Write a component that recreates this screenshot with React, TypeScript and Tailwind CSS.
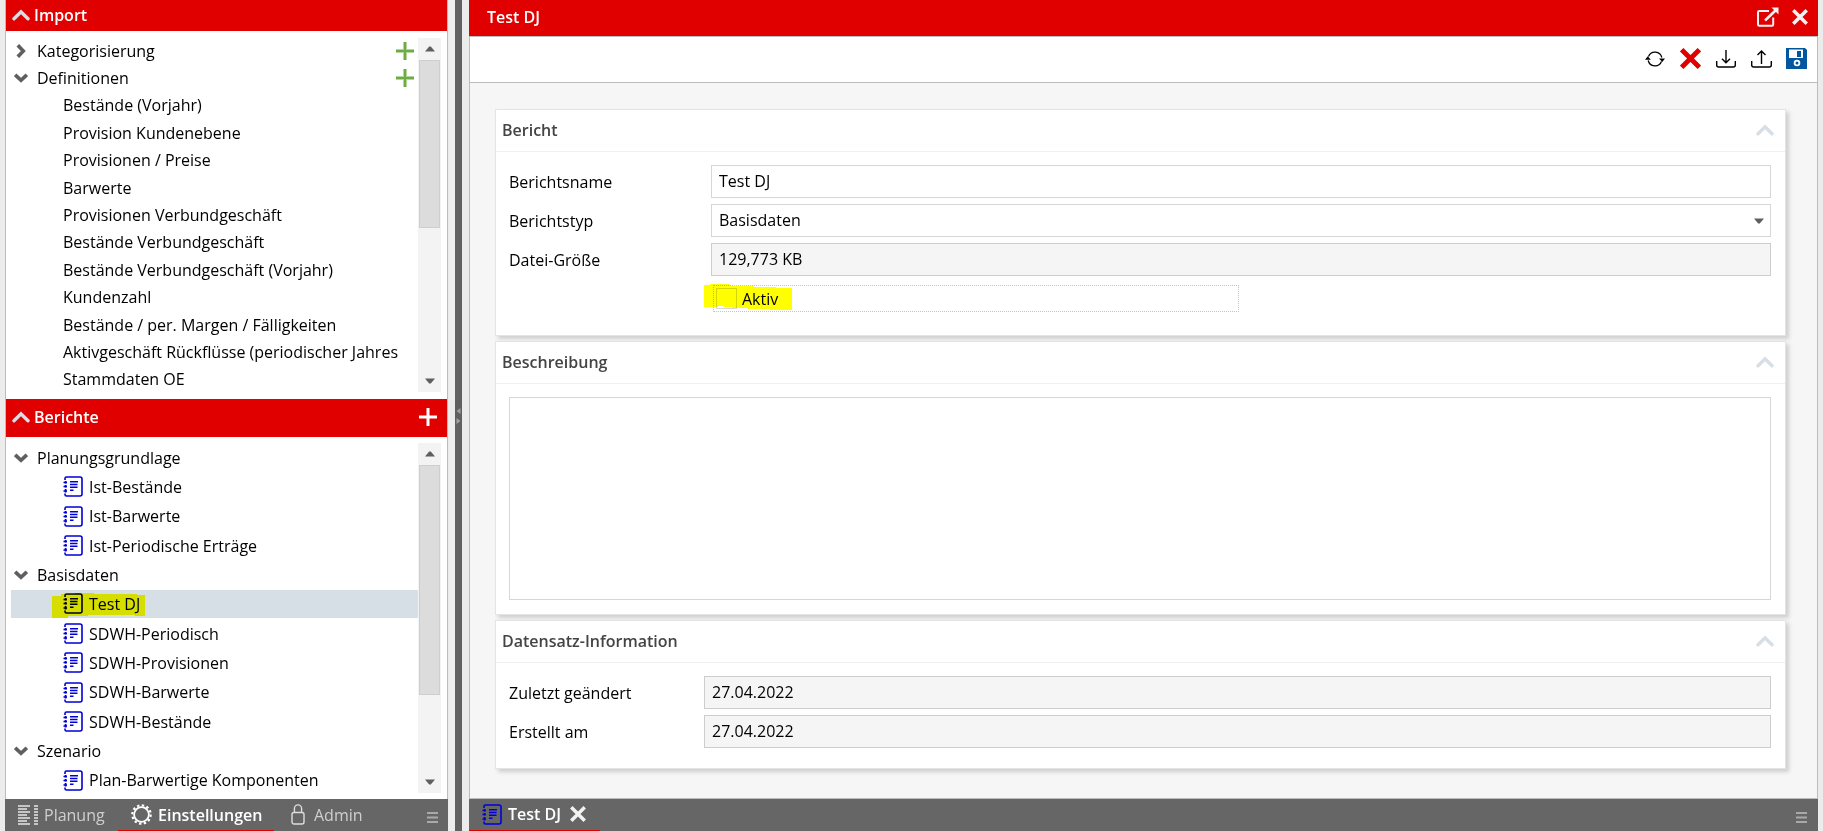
import { useState } from "react";
import type { ReactNode } from "react";

const DEFINITIONS = [
  "Bestände (Vorjahr)",
  "Provision Kundenebene",
  "Provisionen / Preise",
  "Barwerte",
  "Provisionen Verbundgeschäft",
  "Bestände Verbundgeschäft",
  "Bestände Verbundgeschäft (Vorjahr)",
  "Kundenzahl",
  "Bestände / per. Margen / Fälligkeiten",
  "Aktivgeschäft Rückflüsse (periodischer Jahres",
  "Stammdaten OE",
];

const REPORTS = [
  { name: "Planungsgrundlage", items: ["Ist-Bestände", "Ist-Barwerte", "Ist-Periodische Erträge"] },
  {
    name: "Basisdaten",
    items: ["Test DJ", "SDWH-Periodisch", "SDWH-Provisionen", "SDWH-Barwerte", "SDWH-Bestände"],
  },
  { name: "Szenario", items: ["Plan-Barwertige Komponenten"] },
];

function SectionChevron() {
  return (
    <svg width="18" height="12" viewBox="0 0 18 12" fill="none" stroke="#d6dee6" strokeWidth="3.4" strokeLinecap="round" aria-hidden="true">
      <path d="M2 9.8 L9 2.8 L16 9.8" />
    </svg>
  );
}

function TreeChevron({ open }: { open: boolean }) {
  return (
    <svg width="14" height="14" viewBox="0 0 14 14" fill="none" stroke="#5f5f5f" strokeWidth="3.6" aria-hidden="true">
      <path d={open ? "M1.2 3.8 L7 9.3 L12.8 3.8" : "M3.8 1.2 L9.3 7 L3.8 12.8"} />
    </svg>
  );
}

function Plus({ light }: { light?: boolean }) {
  return (
    <svg width="18" height="18" viewBox="0 0 18 18" aria-hidden="true">
      <path d="M9 0V18M0 9H18" stroke={light ? "#ffffff" : "#b4d59c"} strokeWidth={light ? 3 : 4} />
      {!light && <path d="M9 0V18M0 9H18" stroke="#6dab43" strokeWidth="2" />}
    </svg>
  );
}

function ReportIcon({ color = "#0000d8" }: { color?: string }) {
  return (
    <svg className="shrink-0" width="20" height="21" viewBox="0 0 20 21" fill="none" stroke={color} aria-hidden="true">
      <path d="M2 4V2.5Q2 1 3.5 1H17Q19 1 19 3V18Q19 20 17 20H3.5Q2 20 2 18.5V17.5" strokeWidth="1.6" />
      <path d="M0.5 6.5H4M0.5 10.5H4M0.5 15H4" strokeWidth="1.5" />
      <path d="M2.6 5V7.5M2.6 9V11.5M2.6 13V16.5" strokeWidth="1.8" />
      <path d="M7 5.8H15M7 8.5H14.5M7 11.2H14.5M7 14.2H10.5" strokeWidth="1.6" />
    </svg>
  );
}

function Cross({ size, color, width }: { size: number; color: string; width: number }) {
  return (
    <svg width={size} height={size} viewBox="0 0 20 20" stroke={color} strokeWidth={width} aria-hidden="true">
      <path d="M1.6 1.6L18.4 18.4M18.4 1.6L1.6 18.4" />
    </svg>
  );
}

function Bars() {
  return (
    <svg width="12" height="13" viewBox="0 0 12 13" stroke="#a9a9a9" strokeWidth="1.8" aria-hidden="true">
      <path d="M0 2H11M0 6.5H11M0 11H11" />
    </svg>
  );
}

function Triangle({ down, className = "" }: { down?: boolean; className?: string }) {
  return (
    <svg className={className} width="10" height="6" viewBox="0 0 10 6" fill="#5f5f5f" aria-hidden="true">
      <path d={down ? "M0 0.5H10L5.8 5.5H4.2Z" : "M0 5.5H10L5.8 0.5H4.2Z"} />
    </svg>
  );
}

function ScrollTrack({ children }: { children: ReactNode }) {
  return (
    <div aria-hidden="true" className="flex w-[23px] shrink-0 flex-col items-center bg-[#f3f3f3] pb-2">
      <div className="flex h-[22px] shrink-0 items-center">
        <Triangle />
      </div>
      {children}
      <Triangle down className="mt-auto" />
    </div>
  );
}

function SidebarHeader({ title, className, children }: { title: string; className: string; children?: ReactNode }) {
  return (
    <div className={"flex shrink-0 items-center bg-[#e10000] pb-0.5 pl-[6px] pr-[10px] text-white " + className}>
      <button className="flex items-center gap-1 font-semibold">
        <SectionChevron />
        {title}
      </button>
      {children}
    </div>
  );
}

function TreeGroup({ name, open = true, addable }: { name: string; open?: boolean; addable?: boolean }) {
  return (
    <li className="flex items-center pl-[3px] pr-1">
      <button className="flex flex-1 items-center gap-[9px] text-left" aria-expanded={open}>
        <TreeChevron open={open} />
        {name}
      </button>
      {addable && (
        <button aria-label={name + " hinzufügen"}>
          <Plus />
        </button>
      )}
    </li>
  );
}

function Card({ title, children }: { title: string; children: ReactNode }) {
  return (
    <section className="border border-[#e4e4e4] bg-white shadow-[3px_3px_4px_#cfcfcf]">
      <header className="flex h-[42px] items-center justify-between border-b border-[#f0f0f0] pb-0.5 pl-[6px] pr-[11px]">
        <h2 className="font-semibold text-[#444444]">{title}</h2>
        <button aria-label={title + " einklappen"}>
          <SectionChevron />
        </button>
      </header>
      {children}
    </section>
  );
}

function Row({ id, label, wide, children }: { id: string; label: string; wide?: boolean; children: ReactNode }) {
  return (
    <div className="flex items-center">
      <label htmlFor={id} className={"shrink-0 " + (wide ? "w-[202px]" : "w-[195px]")}>
        {label}
      </label>
      {children}
    </div>
  );
}

const FIELD = "h-[33px] w-full min-w-0 flex-1 rounded-none border px-[7px] pb-0.5 outline-none";
const EDITABLE = FIELD + " border-[#d6d6d6] bg-white";
const LOCKED = FIELD + " border-[#cdcdcd] bg-[#f5f5f5]";

export default function App() {
  const [name, setName] = useState("Test DJ");
  const [active, setActive] = useState(false);
  const [description, setDescription] = useState("");

  return (
    <div className="flex h-screen min-h-[780px] bg-[#ececec] pl-[5px] pr-[5px] font-['Open_Sans',sans-serif] text-[16px] leading-[22px] text-black">
      <aside className="flex w-[443px] shrink-0 flex-col">
        <div className="flex min-h-0 flex-1 flex-col border-x border-[#bcbcbc] bg-white">
          <SidebarHeader title="Import" className="h-[31px]" />
          <div className="flex min-h-0 flex-[368_1_0%] pl-[5px] pr-[6px]">
            <ul className="grid min-w-0 flex-1 auto-rows-fr py-[6px]">
              <TreeGroup name="Kategorisierung" open={false} addable />
              <TreeGroup name="Definitionen" addable />
              {DEFINITIONS.map((item) => (
                <li key={item} className="flex items-center overflow-hidden whitespace-nowrap pl-[52px]">
                  {item}
                </li>
              ))}
            </ul>
            <div className="flex py-[7px]">
              <ScrollTrack>
                <div className="h-[168px] w-[21px] border border-[#cecece] bg-[#dcdcdc]" />
              </ScrollTrack>
            </div>
          </div>

          <SidebarHeader title="Berichte" className="h-[38px]">
            <button className="ml-auto" aria-label="Bericht hinzufügen">
              <Plus light />
            </button>
          </SidebarHeader>
          <div className="flex min-h-0 flex-[362_1_0%] pl-[5px] pr-[6px]">
            <ul className="grid min-w-0 flex-1 auto-rows-fr pb-1 pt-[6px]">
              {REPORTS.flatMap((group) => [
                <TreeGroup key={group.name} name={group.name} />,
                ...group.items.map((item) => {
                  const selected = item === "Test DJ";
                  return (
                    <li
                      key={item}
                      className={"relative flex items-center gap-[6px] whitespace-nowrap pl-[52px] " + (selected ? "mb-px bg-[#d6dee6]" : "")}
                    >
                      <ReportIcon />
                      {item}
                      {selected && (
                        <svg className="absolute left-[41px] top-[3px] mix-blend-multiply" width="93" height="25" viewBox="0 0 93 25" fill="#ffff00" aria-hidden="true">
                          <path d="M0 3H9V1H23V0H42V1H85V2H93V23H83V22H36V23H16V25H0Z" />
                        </svg>
                      )}
                    </li>
                  );
                }),
              ])}
            </ul>
            <div className="flex py-[6px]">
              <ScrollTrack>
                <div className="h-[230px] w-[21px] border border-[#cecece] bg-[#dcdcdc]" />
              </ScrollTrack>
            </div>
          </div>
        </div>

        <nav className="flex h-8 shrink-0 bg-[#666666] text-[#cfcfcf]">
          <button className="flex w-[113px] items-center gap-[6px] pb-px pl-[13px]">
            <svg width="20" height="20" viewBox="0 0 20 20" fill="none" stroke="#e6e6e6" strokeWidth="1.3" aria-hidden="true">
              <path d="M0 1H12M0 4H9M0 7H12M0 10H9M0 13H12M0 16H9M0 19H12M16 1H20M16 4H20M16 7H20M16 10H20M16 13H20M16 16H20M16 19H20" />
            </svg>
            Planung
          </button>
          <button className="flex w-[156px] items-center gap-[6px] border-b border-[#e10000] pl-[13px] font-semibold text-white">
            <svg width="21" height="21" viewBox="0 0 21 21" fill="none" stroke="#ffffff" aria-hidden="true">
              <circle cx="10.5" cy="10.5" r="7.4" strokeWidth="1.8" />
              <circle cx="10.5" cy="10.5" r="9.2" strokeWidth="2.2" strokeDasharray="2.4 2.417" />
            </svg>
            Einstellungen
          </button>
          <button className="flex items-center gap-[9px] pb-px pl-[17px]">
            <svg width="14" height="21" viewBox="0 0 14 21" fill="none" stroke="#dddddd" strokeWidth="1.4" aria-hidden="true">
              <rect x="1" y="8.5" width="12" height="11.5" rx="2" />
              <path d="M3.4 8.5V4.5A3.6 3.6 0 0 1 10.6 4.5V8.5" />
            </svg>
            Admin
          </button>
          <button className="ml-auto mr-[9px] mt-[4px]" aria-label="Menü">
            <Bars />
          </button>
        </nav>
      </aside>

      <div className="mx-[7px] flex w-[7px] shrink-0 flex-col items-center justify-center bg-[#606060]">
        <svg width="5" height="16" viewBox="0 0 5 16" fill="#a0a0a0" aria-hidden="true">
          <path d="M4.5 0V6L0.5 3ZM0.5 10V16L4.5 13Z" />
        </svg>
      </div>

      <main className="flex min-w-0 flex-1 flex-col">
        <header className="flex h-9 shrink-0 items-center bg-[#e10000] pb-[3px] pl-[18px] pr-[10px] text-white">
          <h1 className="flex-1 font-semibold">Test DJ</h1>
          <button className="mr-[13px]" aria-label="In neuem Fenster öffnen">
            <svg width="22" height="20" viewBox="0 0 22 20" fill="none" stroke="#f2f2f2" aria-hidden="true">
              <path d="M12 4H2.2Q1 4 1 5.2V17.5Q1 18.7 2.2 18.7H15Q16.2 18.7 16.2 17.5V10.5" strokeWidth="2" />
              <path d="M8 13.5L19 3" strokeWidth="2.6" />
              <path d="M14.5 0.5H21.5V7.5Z" fill="#f2f2f2" stroke="none" />
            </svg>
          </button>
          <button aria-label="Schließen">
            <Cross size={16} color="#f2f2f2" width={4.4} />
          </button>
        </header>

        <div className="flex min-h-0 flex-1 flex-col border border-[#bcbcbc] bg-[#f6f6f6]">
          <div className="flex h-[46px] shrink-0 items-center justify-end border-b border-[#bcbcbc] bg-white pb-0.5 pr-[10px]">
            <button className="mr-[15px]" aria-label="Aktualisieren">
              <svg width="20" height="16" viewBox="0 0 20 16" fill="none" stroke="#000000" strokeWidth="1.3" aria-hidden="true">
                <path d="M3.5 5.5A7 7 0 0 1 16.8 6.5M16.5 10.5A7 7 0 0 1 3.2 9.5" />
                <path d="M14 7.5H20L17.3 11ZM0 8.8L2.8 5.2L5.8 8.8Z" fill="#000000" stroke="none" />
              </svg>
            </button>
            <button className="mr-[15px]" aria-label="Löschen">
              <Cross size={21} color="#e10000" width={4.6} />
            </button>
            <button className="mr-[15px]" aria-label="Herunterladen">
              <svg width="20" height="18" viewBox="0 0 20 18" fill="none" stroke="#000000" strokeWidth="1.4" aria-hidden="true">
                <path d="M0.7 11V15Q0.7 17 2.7 17H17.3Q19.3 17 19.3 15V11M10 0V12.5M6 8.8L10 12.8L14 8.8" />
              </svg>
            </button>
            <button className="mr-[14px]" aria-label="Hochladen">
              <svg width="21" height="18" viewBox="0 0 21 18" fill="none" stroke="#000000" strokeWidth="1.4" aria-hidden="true">
                <path d="M0.7 11V15Q0.7 17 2.7 17H18.3Q20.3 17 20.3 15V11M10.5 14V1M6.5 5L10.5 1L14.5 5" />
              </svg>
            </button>
            <button aria-label="Speichern">
              <svg width="21" height="21" viewBox="0 0 21 21" aria-hidden="true">
                <path d="M0 0H19L21 2V21H0Z" fill="#00579f" />
                <path d="M3 1.5H17V10H3Z" fill="#ffffff" />
                <path d="M11 3H15V9H11Z" fill="#00579f" />
                <circle cx="11" cy="15" r="2.4" fill="#00579f" stroke="#ffffff" strokeWidth="1.8" />
              </svg>
            </button>
          </div>

          <div className="flex min-h-0 flex-1 flex-col gap-[5px] overflow-hidden pb-[30px] pl-[25px] pr-[31px] pt-[26px]">
            <Card title="Bericht">
              <div className="flex flex-col gap-[6px] pb-[23px] pl-[13px] pr-[14px] pt-[13px]">
                <Row id="name" label="Berichtsname" wide>
                  <input id="name" className={EDITABLE} value={name} onChange={(e) => setName(e.target.value)} />
                </Row>
                <Row id="type" label="Berichtstyp" wide>
                  <div className="relative flex min-w-0 flex-1">
                    <select id="type" className={EDITABLE + " appearance-none"}>
                      <option>Basisdaten</option>
                    </select>
                    <Triangle down className="pointer-events-none absolute right-[7px] top-[14px]" />
                  </div>
                </Row>
                <Row id="size" label="Datei-Größe" wide>
                  <input id="size" className={LOCKED} value="129,773 KB" readOnly />
                </Row>
                <div className="pl-[204px] pr-[6px] pt-[3px]">
                  <div className="relative flex h-[27px] w-1/2 items-center border border-dotted border-[#c4c4c4] pl-[2px]">
                    <input
                      id="active"
                      type="checkbox"
                      checked={active}
                      onChange={(e) => setActive(e.target.checked)}
                      className="size-[21px] appearance-none border border-[#d6d6d6] bg-white checked:bg-[#00579f]"
                    />
                    <label htmlFor="active" className="pl-[5px]">
                      Aktiv
                    </label>
                    <svg className="pointer-events-none absolute -left-[10px] -top-[2px] mix-blend-multiply" width="88" height="26" viewBox="0 0 88 26" fill="#ffff00" aria-hidden="true">
                      <path d="M0 1H6V0H26V2H50V3H72V4H88V26H66V25H44V24H28V23H19V22H14V23H0Z" />
                    </svg>
                  </div>
                </div>
              </div>
            </Card>

            <Card title="Beschreibung">
              <div className="flex pb-[14px] pl-[13px] pr-[14px] pt-[13px]">
                <textarea
                  aria-label="Beschreibung"
                  value={description}
                  onChange={(e) => setDescription(e.target.value)}
                  className="h-[203px] w-full resize-none rounded-none border border-[#d6d6d6] bg-white px-[7px] py-1 outline-none"
                />
              </div>
            </Card>

            <Card title="Datensatz-Information">
              <div className="flex flex-col gap-[6px] pb-[20px] pl-[13px] pr-[14px] pt-[13px]">
                <Row id="changed" label="Zuletzt geändert">
                  <input id="changed" className={LOCKED} value="27.04.2022" readOnly />
                </Row>
                <Row id="created" label="Erstellt am">
                  <input id="created" className={LOCKED} value="27.04.2022" readOnly />
                </Row>
              </div>
            </Card>
          </div>
        </div>

        <footer className="flex h-8 shrink-0 bg-[#666666]">
          <div className="flex w-[131px] items-center border-b border-[#e10000] pb-px pl-[13px]">
            <button className="flex items-center gap-[6px] font-semibold text-white">
              <ReportIcon />
              Test DJ
            </button>
            <button className="ml-[9px]" aria-label="Tab schließen">
              <Cross size={16} color="#f2f2f2" width={4.4} />
            </button>
          </div>
          <button className="ml-auto mr-[10px] mt-[4px]" aria-label="Menü">
            <Bars />
          </button>
        </footer>
      </main>
    </div>
  );
}
